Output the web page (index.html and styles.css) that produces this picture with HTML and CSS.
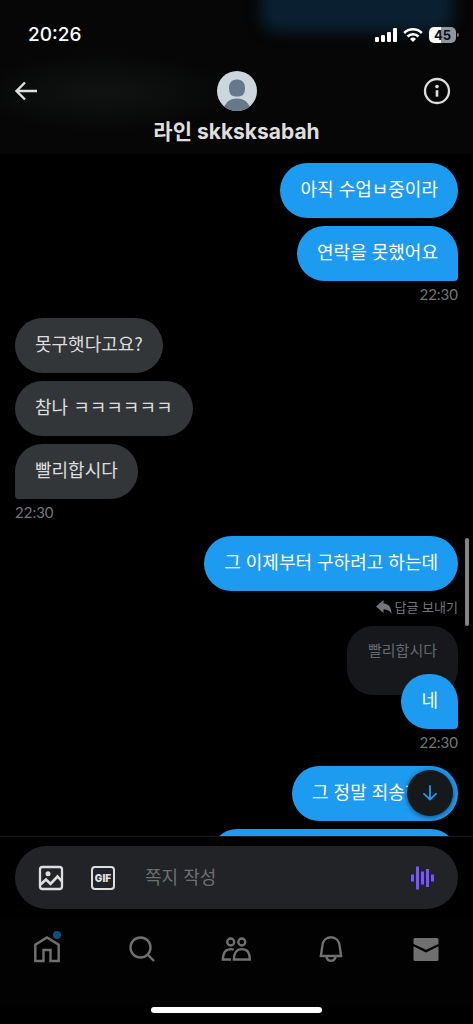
FILE: index.html
```html
<!DOCTYPE html>
<html lang="ko">
<head>
<meta charset="utf-8">
<meta name="viewport" content="width=device-width, initial-scale=1">
<title>쪽지</title>
<link rel="stylesheet" href="styles.css">
</head>
<body>
<div class="app">
  <header class="top">
    <div class="status">
      <span class="clock">20:26</span>
      <div class="indicators">
        <svg width="22" height="14" viewBox="0 0 22 14" fill="#fff"><rect x="0" y="9" width="4" height="5" rx="1"/><rect x="6" y="7" width="4" height="7" rx="1"/><rect x="12" y="4" width="4" height="10" rx="1"/><rect x="18" y="0" width="4" height="14" rx="1"/></svg>
        <svg width="20" height="14" viewBox="0 0 20 14" fill="none" stroke="#fff" stroke-width="2.5"><path d="M1.2 5a12.4 12.4 0 0 1 17.6 0"/><path d="M4.500 8.500a7.800 7.800 0 0 1 11 0"/><path d="M10 14l-3-3.100a4.300 4.300 0 0 1 6 0z" fill="#fff" stroke="none"/></svg>
        <span class="battery"><span class="battery-level">45</span></span>
      </div>
    </div>
    <div class="bar">
      <button class="icon-btn" type="button" aria-label="뒤로"><svg width="24" height="20" viewBox="0 0 24 20" fill="none" stroke="#dedede" stroke-width="2.400"><path d="M23 10H2.500M11 1.500L2.500 10l8.500 8.500"/></svg></button>
      <svg class="avatar" width="42" height="42" viewBox="0 0 42 42"><defs><clipPath id="face"><circle cx="21" cy="21" r="20"/></clipPath></defs><g clip-path="url(#face)"><path fill="#ccd6dd" d="M0 0h42v42H0z"/><path fill="#66788a" d="M21 9.500c5 0 8 3 8 8.500 0 6-2 8.500-8 8.500s-8-2.500-8-8.500c0-5.500 3-8.500 8-8.500zM7 42c1-9 6.500-13.500 14-13.500s13 4.500 14 13.500z"/></g></svg>
      <button class="icon-btn" type="button" aria-label="정보"><svg width="28" height="28" viewBox="0 0 28 28"><circle cx="14" cy="14" r="12" fill="none" stroke="#dedede" stroke-width="2.300"/><circle cx="14" cy="9.600" r="1.800" fill="#dedede"/><path d="M12.700 13.200h2.600v6.500h-2.600z" fill="#dedede"/></svg></button>
    </div>
    <h1 class="name">라인 skksksabah</h1>
  </header>

  <main class="thread">
    <div class="group sent">
      <p class="bubble">아직 수업ㅂ중이라</p>
      <p class="bubble last">연락을 못했어요</p>
      <time class="time">22:30</time>
    </div>
    <div class="group received">
      <p class="bubble">못구햇다고요?</p>
      <p class="bubble">참나 ㅋㅋㅋㅋㅋㅋ</p>
      <p class="bubble last">빨리합시다</p>
      <time class="time">22:30</time>
    </div>
    <div class="group sent">
      <p class="bubble">그 이제부터 구하려고 하는데</p>
      <div class="reply">
        <span class="reply-label"><svg width="16" height="16" viewBox="0 0 16 16" fill="#71767b"><path d="M0 7.500L7.500 1v3.600c5.500.4 8 4 8 10.400-1.500-3-3.500-4.600-8-4.600V14z"/></svg>답글 보내기</span>
        <p class="quote">빨리합시다</p>
        <p class="bubble last">네</p>
      </div>
      <time class="time">22:30</time>
    </div>
    <div class="group sent">
      <p class="bubble">그 정말 죄송한데</p>
      <p class="bubble upcoming"></p>
    </div>
    <span class="scrollbar"></span>
    <button class="jump" type="button" aria-label="최신 쪽지로 이동"><svg width="14" height="16" viewBox="0 0 14 16" fill="none" stroke="#1d9bf0" stroke-width="1.800" stroke-linecap="round" stroke-linejoin="round"><path d="M7 1v13.500M1 8.800l6 5.700 6-5.700"/></svg></button>
  </main>

  <form class="composer">
    <div class="field">
      <button class="icon-btn" type="button" aria-label="사진"><svg width="26" height="26" viewBox="0 0 26 26" fill="none" stroke="#dedede" stroke-width="2.300"><rect x="2" y="2" width="22" height="22" rx="2.500"/><circle cx="10" cy="8.700" r="2.500" fill="#dedede" stroke="none"/><path d="M2.500 19.500l5.500-5 4.500 4.300 7-7.300 4.500 5" stroke-width="2.600"/></svg></button>
      <button class="icon-btn gif" type="button">GIF</button>
      <input class="input" type="text" placeholder="쪽지 작성" aria-label="쪽지 작성">
      <button class="icon-btn" type="button" aria-label="음성 쪽지"><svg width="24" height="24" viewBox="0 0 24 24" fill="#7856ff"><path d="M0 8.500h3v7H0zM5 .5h3v23H5zM10 5.500h3v13h-3zM15 3h3v18h-3zM20 8.500h3v7h-3z"/></svg></button>
    </div>
  </form>

  <nav class="tabs">
    <a class="tab" href="#home" aria-label="홈"><svg width="28" height="28" viewBox="0 0 28 28" fill="none" stroke="#707070" stroke-width="2.400"><path d="M2.300 26V9.700L14 2.500l11.700 7.200V26h-8.200V15h-7v11z"/></svg><span class="dot"></span></a>
    <a class="tab" href="#search" aria-label="검색"><svg width="28" height="28" viewBox="0 0 28 28" fill="none" stroke="#707070" stroke-width="2.400"><circle cx="12.500" cy="12.500" r="10"/><path d="M19.500 19.500l6.500 6.500"/></svg></a>
    <a class="tab" href="#communities" aria-label="커뮤니티"><svg width="32" height="28" viewBox="0 0 32 28" fill="none" stroke="#707070" stroke-width="2.300"><circle cx="10.700" cy="7" r="3.500"/><circle cx="21.800" cy="7" r="3.500"/><path d="M11 24.500H2.800c.2-6.500 3-10.300 8.200-10.300 1 0 2 .1 2.700.4M13.800 24.500c0-6.500 3-10.300 8-10.300s8 3.800 8 10.300z"/></svg></a>
    <a class="tab" href="#notifications" aria-label="알림"><svg width="28" height="28" viewBox="0 0 28 28" fill="none" stroke="#707070" stroke-width="2.400"><path d="M3.900 21L5.400 10.500C6 5.500 9.300 2.300 14 2.300s8 3.200 8.600 8.200L24.100 21zM9.300 21.500c.7 3 2.300 4.300 4.700 4.300s4-1.300 4.700-4.300"/></svg></a>
    <a class="tab" href="#messages" aria-label="쪽지"><svg width="28" height="28" viewBox="0 0 28 28" fill="#707070"><path d="M1.500 4.500a1.500 1.500 0 0 1 1.500-1.500h22a1.500 1.500 0 0 1 1.500 1.500v4.400L14 14.700 1.500 8.900zM1.500 11.200L14 17.500l12.500-6.300v13.300a1.500 1.500 0 0 1-1.500 1.500h-22a1.500 1.500 0 0 1-1.500-1.500z"/></svg></a>
  </nav>
  <div class="home-indicator"></div>
</div>
</body>
</html>
```
FILE: styles.css
```css
* { box-sizing: border-box; }
body {
  margin: 0;
  background: #000;
  color: #dedede;
  font-family: "Noto Sans CJK KR", sans-serif;
}
p, h1 { margin: 0; }
svg { display: block; flex: none; }
button {
  padding: 0;
  border: 0;
  background: none;
  color: inherit;
  font: inherit;
}
.app {
  display: flex;
  flex-direction: column;
  height: 100vh;
  overflow: hidden;
}

/* Header */
.top {
  flex: none;
  padding: 22px 16px 8px;
  background:
    radial-gradient(ellipse 130px 40px at 22% 60%, #111313, transparent),
    linear-gradient(#060606, #060606);
  position: relative;
  overflow: hidden;
}
.top::before {
  content: "";
  position: absolute;
  top: -20px;
  right: 20px;
  width: 192px;
  height: 52px;
  border-radius: 16px;
  background: #0a2030;
  filter: blur(7px);
}
.status {
  position: relative;
  display: flex;
  align-items: center;
  justify-content: space-between;
  height: 26px;
  padding-left: 12px;
}
.clock {
  color: #fff;
  font: 500 19px/26px Inter, sans-serif;
}
.indicators {
  display: flex;
  align-items: center;
  gap: 6px;
}
.battery {
  position: relative;
  width: 27px;
  height: 16px;
  margin-right: 1px;
  border-radius: 5px;
  background: linear-gradient(90deg, #fff 45%, #92979b 45%);
}
.battery::after {
  content: "";
  position: absolute;
  top: 6px;
  right: -3px;
  width: 2px;
  height: 4px;
  border-radius: 0 2px 2px 0;
  background: #777;
}
.battery-level {
  display: block;
  color: #0b1218;
  font: 700 13px/16px Inter, sans-serif;
  text-align: center;
}
.bar {
  position: relative;
  display: flex;
  align-items: center;
  justify-content: space-between;
  height: 42px;
  margin-top: 22px;
}
.bar .icon-btn { width: 34px; }
.bar .icon-btn:first-child svg { margin-left: -2px; }
.name {
  margin-top: 6px;
  font: 700 21px/28px Inter, "Noto Sans CJK KR", sans-serif;
  text-align: center;
}

/* Conversation */
.thread {
  position: relative;
  flex: 1;
  min-height: 0;
  padding: 9px 15px 0;
  overflow: hidden;
}
.group {
  display: flex;
  flex-direction: column;
  align-items: flex-start;
}
.sent { align-items: flex-end; }
.bubble {
  flex: none;
  min-height: 55px;
  padding: 12px 20px 17px;
  border-radius: 28px;
  background: #333639;
  font-size: 18px;
  line-height: 26px;
}
.bubble + .bubble { margin-top: 8px; }
.sent .bubble {
  background: #1d9bf0;
  color: #fff;
}
.received .last { border-bottom-left-radius: 4px; }
.sent .last { border-bottom-right-radius: 4px; }
.upcoming { width: 56%; }
.time {
  padding: 4px 0 15px;
  color: #71767b;
  font: 15px/18px Lato, sans-serif;
}
.reply {
  display: flex;
  flex-direction: column;
  align-items: flex-end;
}
.reply-label {
  display: flex;
  align-items: center;
  gap: 3px;
  padding: 7px 0 10px;
  color: #71767b;
  font-size: 13px;
  line-height: 18px;
}
.quote {
  height: 69px;
  margin-bottom: -21px;
  padding: 12px 21px;
  border-radius: 26px;
  background: #16181c;
  color: #65696d;
  font-size: 15px;
  line-height: 24px;
}
.scrollbar {
  position: absolute;
  top: 384px;
  right: 4px;
  width: 4px;
  height: 88px;
  border-radius: 2px;
  background: #858585;
}
.jump {
  position: absolute;
  right: 20px;
  bottom: 20px;
  display: grid;
  place-items: center;
  width: 46px;
  height: 46px;
  border-radius: 50%;
  background: #15191c;
  box-shadow: 0 1px 5px #0008;
}

/* Composer */
.composer {
  flex: none;
  padding: 9px 15px 10px;
  border-top: 1px solid #1b1c1e;
}
.field {
  display: flex;
  align-items: center;
  height: 63px;
  padding: 0 23px;
  border-radius: 32px;
  background: #212327;
}
.gif {
  width: 24px;
  height: 24px;
  margin-left: 27px;
  border: 2px solid #dedede;
  border-radius: 4px;
  font: 900 10px/20px Inter, sans-serif;
  text-align: center;
}
.input {
  flex: 1;
  min-width: 0;
  margin-left: 30px;
  padding: 0 0 3px;
  border: 0;
  outline: 0;
  background: none;
  color: #dedede;
  font: 18px/26px "Noto Sans CJK KR", sans-serif;
}
.input::placeholder {
  color: #6c7074;
  opacity: 1;
}

/* Tab bar */
.tabs {
  flex: none;
  display: flex;
  height: 88px;
  background: #020202;
}
.tab {
  position: relative;
  flex: 1;
  display: flex;
  justify-content: center;
  padding-top: 16px;
}
.dot {
  position: absolute;
  top: 12px;
  left: calc(50% + 6px);
  width: 8px;
  height: 8px;
  border-radius: 50%;
  background: #0f4f7c;
}
.home-indicator {
  flex: none;
  width: 36%;
  height: 6px;
  margin: 0 auto 11px;
  border-radius: 3px;
  background: #fff;
}
```
